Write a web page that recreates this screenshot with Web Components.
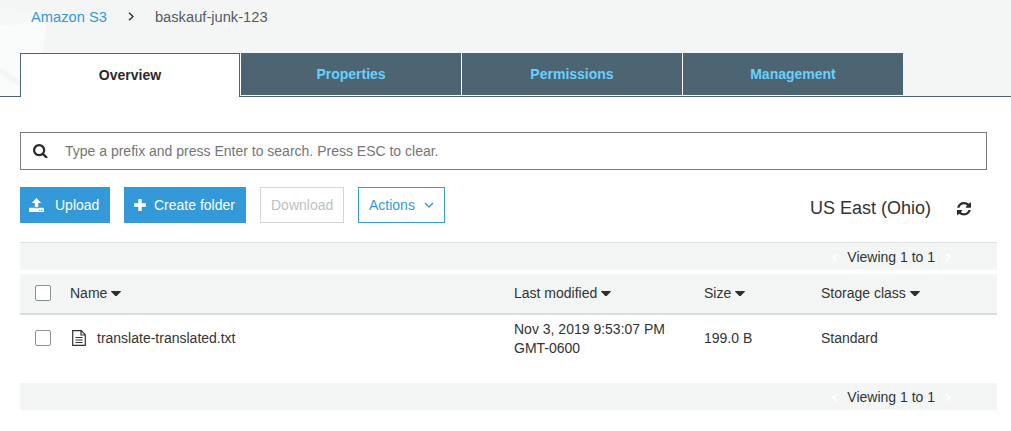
<!DOCTYPE html>
<html lang="en">
<head>
<meta charset="utf-8">
<title>S3 bucket</title>
<style>
html,body{margin:0;background:#fff;height:100%;overflow:hidden}
body{font-family:"Liberation Sans",Arial,sans-serif;font-size:14px;color:#333}
</style>
</head>
<body>
<s3-console></s3-console>
<script>
const define = (name, html, setup) => customElements.define(name, class extends HTMLElement {
  constructor() {
    super();
    this.attachShadow({ mode: 'open' }).innerHTML = html;
  }
  connectedCallback() { if (setup) setup(this, this.shadowRoot); }
});

const icons = {
  search: [1664, 1664, 'M1152 704q0 -185 -131.500 -316.500t-316.500 -131.500t-316.500 131.500t-131.500 316.500t131.500 316.500t316.500 131.500t316.500 -131.500t131.500 -316.500zM1664 1536q0 52 -38 90t-90 38q-54 0 -90 -38l-343 -342q-179 124 -399 124q-143 0 -273.500 -55.500t-225 -150t-150 -225t-55.500 -273.500t55.500 -273.500t150 -225t225 -150t273.500 -55.500t273.500 55.500t225 150t150 225t55.500 273.500q0 220 -124 399l343 343q37 37 37 90z'],
  upload: [15, 15, 'M7.5 0L12.2 5H9.200V9.200H5.800V5H2.800ZM.8 9.800H4.800V10.300H10.200V9.800H14.200Q15 9.800 15 10.600V13.200Q15 14 14.200 14H.8Q0 14 0 13.200V10.600Q0 9.800.8 9.800ZM10.200 11.800V12.900H11.300V11.800ZM12.400 11.800V12.900H13.500V11.800Z'],
  plus: [12, 12, 'M4.300 .6Q4.300 0 4.900 0H7.100Q7.700 0 7.700 .6V4.300H11.400Q12 4.300 12 4.900V7.100Q12 7.700 11.400 7.700H7.700V11.400Q7.700 12 7.100 12H4.900Q4.300 12 4.300 11.400V7.700H.6Q0 7.700 0 7.100V4.900Q0 4.300 .6 4.300H4.300Z'],
  refresh: [1536, 1536, 'M1511 928q0 5 -1 7q-64 268 -268 434.500t-478 166.500q-146 0 -282.500 -55t-243.500 -157l-129 129q-19 19 -45 19t-45 -19t-19 -45v-448q0 -26 19 -45t45 -19h448q26 0 45 19t19 45t-19 45l-137 137q71 66 161 102t187 36q134 0 250 -65t186 -179q11 -17 53 -117q8 -23 30 -23h192q13 0 22.500 9.500t9.500 22.500zM1536 128v448q0 26 -19 45t-45 19h-448q-26 0 -45 -19t-19 -45t19 -45l138 -138q-148 -137 -349 -137q-134 0 -250 65t-186 179q-11 17 -53 117q-8 23 -30 23h-199q-13 0 -22.500 -9.500t-9.500 -22.500v-7q65 -268 270 -434.500t480 -166.500q146 0 284 55.500t245 156.500l130 -129q19 -19 45 -19t45 19t19 45z'],
  caret: [10, 5.5, 'M.4 0H9.600Q10.200 .3 9.800 .8L5.500 5.200Q5 5.600 4.500 5.200L.2 .8Q-.2 .3 .4 0Z'],
  right: [6, 9, 'M1 .7L5 4.500L1 8.300', 1.5],
  left: [6, 9, 'M5 .7L1 4.500L5 8.300', 1.5],
  down: [10, 6, 'M1 1L5 5L9 1', 1.4],
  file: [14, 16, 'M.7 .7H9.300L13.300 4.700V15.300H.7ZM9 1V5H13M3.500 7.500H10.500M3.500 10H10.500M3.500 12.500H10.500', 1.2]
};
define('s3-icon', `<style>:host{display:inline-block;flex:none;line-height:0}svg{display:block;width:100%;height:100%}</style><svg></svg>`, (el, root) => {
  const [w, h, d, stroke] = icons[el.getAttribute('name')];
  const svg = root.querySelector('svg');
  svg.setAttribute('viewBox', `0 0 ${w} ${h}`);
  svg.setAttribute('preserveAspectRatio', 'none');
  svg.innerHTML = stroke
    ? `<path d="${d}" fill="none" stroke="currentColor" stroke-width="${stroke}"/>`
    : `<path d="${d}" fill="currentColor" fill-rule="evenodd"/>`;
});

define('s3-breadcrumb', `<style>
:host{display:flex;align-items:center;height:33px;padding-left:31px;font-size:14.7px;color:#545b64}
::slotted(a){color:#3399d9}
s3-icon{width:6px;height:9px;margin:0 21px;color:#333}
</style><slot name="root"></slot><s3-icon name="right"></s3-icon><slot></slot>`);

define('s3-tab', `<style>
:host{display:block;box-sizing:border-box;width:220px;height:42px;line-height:42px;text-align:center;font-weight:bold;background:#4d6472;color:#66d1ff}
:host([active]){height:44px;background:#fff;color:#2a2a2a;border:1px solid #4d6472;border-bottom:0}
</style><slot></slot>`);

define('s3-header', `<style>
:host{display:block;height:97px;background:linear-gradient(#4d6472,#4d6472) 0 96px/100% 1px no-repeat,#f4f6f6}
.wrap{display:grid;height:97px}
.art,.content{grid-area:1/1}
.art{display:block;width:60px;height:96px}
.content{display:flex;flex-direction:column}
nav{display:flex;gap:1px;align-items:flex-start;margin:20px 0 0 20px;width:883px;height:44px;background:linear-gradient(#fff,#fff) 220px 0/663px 43px no-repeat}
</style><div class="wrap"><svg class="art" viewBox="0 0 60 96">
<path d="M0 9Q27 9 39 17L47 23Q45 39 42 53V96H0Z" fill="#fafcfb"/>
<path d="M0 9Q30 9 36 17Q30 24 0 26Z" fill="#f6f8f8"/>
<path d="M0 68L20 80V87L0 74Z" fill="#f4f6f6"/></svg>
<div class="content"><slot name="crumbs"></slot><nav><slot></slot></nav></div></div>`);

define('s3-search', `<style>
:host{display:flex;align-items:center;box-sizing:border-box;height:38px;width:967px;border:1px solid #7b7b7b;padding-left:12px;color:#757575}
s3-icon{width:14.500px;height:14.500px;margin-right:17.500px;color:#2b2b2b}
</style><s3-icon name="search"></s3-icon><slot></slot>`);

define('s3-button', `<style>
:host{display:flex;align-items:center;box-sizing:border-box;height:36px;border:1px solid #3399d9;color:#3399d9}
:host([primary]){background:#3399d9;color:#fff}
:host([disabled]){border-color:#d5d5d5;color:#bfbfbf}
</style><slot></slot>`);

define('s3-toolbar', `<style>
:host{display:flex;gap:14px;height:36px;margin-top:17px}
.upload{width:90px}.upload s3-icon{width:15px;height:15px;margin:1px 11px 0 8px}
.create{width:122px}.create s3-icon{width:12px;height:12px;margin:0 8px 1px 9px}
.download{width:84px;padding-left:10px}
.actions{width:87px;padding-left:10px}.actions s3-icon{width:10px;height:6px;margin-left:9px}
.region{display:flex;align-items:center;margin-left:auto;padding:7px 16px 0 0;font-size:18px}
.region s3-icon{width:14px;height:13.500px;margin:1px 0 0 26px;color:#2b2b2b}
</style>
<s3-button class="upload" primary><s3-icon name="upload"></s3-icon>Upload</s3-button>
<s3-button class="create" primary><s3-icon name="plus"></s3-icon>Create folder</s3-button>
<s3-button class="download" disabled>Download</s3-button>
<s3-button class="actions">Actions<s3-icon name="down"></s3-icon></s3-button>
<div class="region"><slot></slot><s3-icon name="refresh"></s3-icon></div>`);

define('s3-pager', `<style>
:host{display:flex;align-items:center;justify-content:flex-end;box-sizing:border-box;width:977px;height:27px;padding-right:46px;background:#f4f6f6}
:host([top]){height:28px;border-top:1px solid #dfe3e3}
s3-icon{width:6px;height:9px;color:#fff;margin-top:2px}
span{margin:1px 10px 0 9px}
</style><s3-icon name="left"></s3-icon><span><slot></slot></span><s3-icon name="right"></s3-icon>`);

define('s3-row', `<style>
:host{display:grid;grid-template-columns:50px 444px 190px 117px 1fr;align-items:center;width:977px;height:47px;line-height:19px}
:host([head]){height:39px;background:#f4f6f6;border-bottom:2px solid #d9dddd}
.check{box-sizing:border-box;width:16px;height:16px;margin:0 0 1px 15px;border:1px solid #899292;border-radius:2px;background:#fff}
</style><div class="check"></div><slot></slot>`);

define('s3-cell', `<style>
:host{display:flex;align-items:center;white-space:pre-line}
s3-icon.caret{display:none;width:10px;height:5.500px;margin-left:4px;color:#2d2d2d}
:host([sort]) s3-icon.caret{display:block}
s3-icon.file{display:none;width:14px;height:16px;margin:0 11px 1px 2px}
:host([file]) s3-icon.file{display:block}
</style><s3-icon class="file" name="file"></s3-icon><slot></slot><s3-icon class="caret" name="caret"></s3-icon>`);

define('s3-console', `<style>
:host{display:block}
main{padding:35px 24px 0 20px;box-sizing:border-box}
.top{margin-top:19px}.head{margin-top:4px}.bottom{margin-top:21px}
</style>
<s3-header><s3-breadcrumb slot="crumbs"><a slot="root">Amazon S3</a>baskauf-junk-123</s3-breadcrumb>
<s3-tab active>Overview</s3-tab><s3-tab>Properties</s3-tab><s3-tab>Permissions</s3-tab><s3-tab>Management</s3-tab></s3-header>
<main>
<s3-search>Type a prefix and press Enter to search. Press ESC to clear.</s3-search>
<s3-toolbar>US East (Ohio)</s3-toolbar>
<s3-pager class="top" top>Viewing 1 to 1</s3-pager>
<s3-row class="head" head><s3-cell sort>Name</s3-cell><s3-cell sort>Last modified</s3-cell><s3-cell sort>Size</s3-cell><s3-cell sort>Storage class</s3-cell></s3-row>
<s3-row><s3-cell file>translate-translated.txt</s3-cell><s3-cell>Nov 3, 2019 9:53:07 PM
GMT-0600</s3-cell><s3-cell>199.0 B</s3-cell><s3-cell>Standard</s3-cell></s3-row>
<s3-pager class="bottom">Viewing 1 to 1</s3-pager>
</main>`);
</script>
</body>
</html>
